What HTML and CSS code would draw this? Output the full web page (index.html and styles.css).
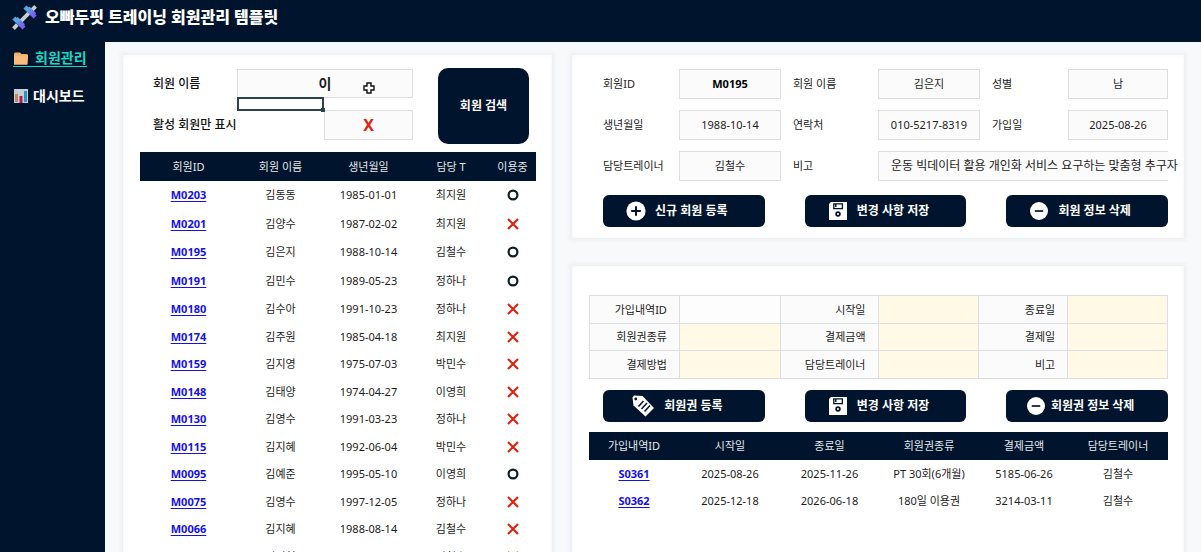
FILE: index.html
```html
<!DOCTYPE html>
<html lang="ko">
<head>
<meta charset="utf-8">
<title>오빠두핏 트레이닝 회원관리 템플릿</title>
<link rel="stylesheet" href="styles.css">
</head>
<body>
<svg class="defs" aria-hidden="true">
  <symbol id="plus" viewBox="0 0 20 20"><circle cx="10" cy="10" r="9.6" fill="#fff"/><path d="M10 5.2v9.6M5.2 10h9.6" stroke="#00152d" stroke-width="2"/></symbol>
  <symbol id="minus" viewBox="0 0 20 20"><circle cx="10" cy="10" r="9" fill="#fff"/><path d="M5.8 10h8.4" stroke="#2a3b50" stroke-width="2"/></symbol>
  <symbol id="save" viewBox="0 0 20 20"><path d="M3 1H19v18H1V3z" fill="#fff"/><path d="M5.8 2.800h8.600v4.800h-8.600z" fill="none" stroke="#00152d" stroke-width="1.300"/><path d="M7.800 3v3" stroke="#00152d" stroke-width="1.400"/><circle cx="10" cy="13" r="1.900" fill="none" stroke="#00152d" stroke-width="1.700"/></symbol>
  <symbol id="tag" viewBox="0 0 24 24"><path d="M1.500 3.500 3 1.500l8.500.500L23 14l-8.500 8.500L2.500 11.500z" fill="#fff"/><circle cx="4.800" cy="5" r="1.400" fill="#00152d"/><path d="m7.500 12.500 5-5.500M10.500 15l5.500-6M13.500 17.500l5.500-6" stroke="#00152d" stroke-width="1.500"/></symbol>
  <symbol id="on" viewBox="0 0 12 12"><circle cx="6" cy="6" r="4.400" fill="none" stroke="#0c2020" stroke-width="2.200"/></symbol>
  <symbol id="off" viewBox="0 0 12 12"><path d="m1 1 10 10M11 1 1 11" stroke="#e02410" stroke-width="2.200"/></symbol>
</svg>

<header class="topbar">
  <svg class="logo" viewBox="0 0 26 26" aria-hidden="true">
    <defs><linearGradient id="g" x1="0" y1="0" x2="1" y2="1"><stop offset=".25" stop-color="#55a9dc"/><stop offset=".75" stop-color="#7a62f6"/></linearGradient></defs>
    <path d="M7.500 18.500 18.500 7.500" stroke="#c9ccd2" stroke-width="4"/>
    <path d="m1.500 24.500 4-4M20.500 5.500l4-4" stroke="#c9ccd2" stroke-width="4"/>
    <path d="M2 13.500 12.500 24" stroke="url(#g)" stroke-width="4.500"/>
    <path d="M5 13.500l7.500 7.500" stroke="url(#g)" stroke-width="3"/>
    <path d="M13.500 2 24 12.500" stroke="url(#g)" stroke-width="4.500"/>
    <path d="M17 2.500l7 7" stroke="url(#g)" stroke-width="3"/>
  </svg>
  <h1 class="title">오빠두핏 트레이닝 회원관리 템플릿</h1>
</header>

<div class="shell">
  <nav class="sidebar">
    <a class="nav-link active" href="#members"><svg class="nav-icon" viewBox="0 0 16 14" aria-hidden="true"><path d="M1 2.500 2 1.500h5L8.500 3H14l1 1-.500 9.500H1z" fill="#eeb16a"/><path d="M1 4.500h14l-1 9H1z" fill="#f8bd7c"/></svg>회원관리</a>
    <a class="nav-link" href="#dashboard"><svg class="nav-icon" viewBox="0 0 16 14" aria-hidden="true"><path d="M1 0h14v14H1z" fill="#c9cdd3"/><path d="M2 5h3v8H2z" fill="#b98a63"/><path d="M6.500 7h3v7h-3z" fill="#b01d50"/><path d="M11 2h3v11h-3z" fill="#2397c4"/></svg>대시보드</a>
  </nav>

  <main class="content">
    <section class="panel members">
      <form class="search">
        <label class="search-label" for="q">회원 이름</label>
        <div class="query"><input class="field query-input" id="q" value="이">
          <svg class="cursor" viewBox="0 0 12 12" aria-hidden="true"><path d="M4 1h4v3h3v4H8v3H4V8H1V4h3z" fill="#fff" stroke="#111" stroke-width="1.400"/></svg>
        </div>
        <div class="selection"></div>
        <label class="search-label active-label" for="act">활성 회원만 표시</label>
        <input class="field active-input" id="act" value="X">
        <button class="btn search-btn" type="button">회원 검색</button>
      </form>
      <table class="list member-list">
        <colgroup><col class="m1"><col class="m2"><col class="m3"><col class="m4"><col class="m5"></colgroup>
        <thead><tr><th>회원ID</th><th>회원 이름</th><th>생년월일</th><th>담당 T</th><th>이용중</th></tr></thead>
        <tbody>
          <tr><td><a href="#M0203">M0203</a></td><td>김동동</td><td>1985-01-01</td><td>최지원</td><td><svg class="mark"><use href="#on"/></svg></td></tr>
          <tr><td><a href="#M0201">M0201</a></td><td>김양수</td><td>1987-02-02</td><td>최지원</td><td><svg class="mark"><use href="#off"/></svg></td></tr>
          <tr><td><a href="#M0195">M0195</a></td><td>김은지</td><td>1988-10-14</td><td>김철수</td><td><svg class="mark"><use href="#on"/></svg></td></tr>
          <tr><td><a href="#M0191">M0191</a></td><td>김민수</td><td>1989-05-23</td><td>정하나</td><td><svg class="mark"><use href="#on"/></svg></td></tr>
          <tr><td><a href="#M0180">M0180</a></td><td>김수아</td><td>1991-10-23</td><td>정하나</td><td><svg class="mark"><use href="#off"/></svg></td></tr>
          <tr><td><a href="#M0174">M0174</a></td><td>김주원</td><td>1985-04-18</td><td>최지원</td><td><svg class="mark"><use href="#off"/></svg></td></tr>
          <tr><td><a href="#M0159">M0159</a></td><td>김지영</td><td>1975-07-03</td><td>박민수</td><td><svg class="mark"><use href="#off"/></svg></td></tr>
          <tr><td><a href="#M0148">M0148</a></td><td>김태양</td><td>1974-04-27</td><td>이영희</td><td><svg class="mark"><use href="#off"/></svg></td></tr>
          <tr><td><a href="#M0130">M0130</a></td><td>김영수</td><td>1991-03-23</td><td>정하나</td><td><svg class="mark"><use href="#off"/></svg></td></tr>
          <tr><td><a href="#M0115">M0115</a></td><td>김지혜</td><td>1992-06-04</td><td>박민수</td><td><svg class="mark"><use href="#off"/></svg></td></tr>
          <tr><td><a href="#M0095">M0095</a></td><td>김예준</td><td>1995-05-10</td><td>이영희</td><td><svg class="mark"><use href="#on"/></svg></td></tr>
          <tr><td><a href="#M0075">M0075</a></td><td>김영수</td><td>1997-12-05</td><td>정하나</td><td><svg class="mark"><use href="#off"/></svg></td></tr>
          <tr><td><a href="#M0066">M0066</a></td><td>김지혜</td><td>1988-08-14</td><td>김철수</td><td><svg class="mark"><use href="#off"/></svg></td></tr>
          <tr><td><a href="#M0061">M0061</a></td><td>김지현</td><td>1990-03-11</td><td>김철수</td><td><svg class="mark"><use href="#off"/></svg></td></tr>
        </tbody>
      </table>
    </section>

    <div class="side">
      <section class="panel detail">
        <form class="detail-form">
          <label for="d1">회원ID</label><input class="field strong" id="d1" value="M0195">
          <label for="d2">회원 이름</label><input class="field" id="d2" value="김은지">
          <label for="d3">성별</label><input class="field" id="d3" value="남">
          <label for="d4">생년월일</label><input class="field" id="d4" value="1988-10-14">
          <label for="d5">연락처</label><input class="field" id="d5" value="010-5217-8319">
          <label for="d6">가입일</label><input class="field" id="d6" value="2025-08-26">
          <label for="d7">담당트레이너</label><input class="field" id="d7" value="김철수">
          <label for="d8">비고</label><div class="field note"><input class="note-input" id="d8" value="운동 빅데이터 활용 개인화 서비스 요구하는 맞춤형 추구자"></div>
        </form>
        <div class="actions">
          <button class="btn" type="button"><svg class="icon"><use href="#plus"/></svg>신규 회원 등록</button>
          <button class="btn" type="button"><svg class="icon"><use href="#save"/></svg>변경 사항 저장</button>
          <button class="btn" type="button"><svg class="icon"><use href="#minus"/></svg>회원 정보 삭제</button>
        </div>
      </section>

      <section class="panel pass">
        <form class="pass-form">
          <label for="p1">가입내역ID</label><input class="plain" id="p1">
          <label for="p2">시작일</label><input id="p2">
          <label for="p3">종료일</label><input id="p3">
          <label for="p4">회원권종류</label><input id="p4">
          <label for="p5">결제금액</label><input id="p5">
          <label for="p6">결제일</label><input id="p6">
          <label for="p7">결제방법</label><input id="p7">
          <label for="p8">담당트레이너</label><input id="p8">
          <label for="p9">비고</label><input id="p9">
        </form>
        <div class="actions pass-actions">
          <button class="btn" type="button"><svg class="icon tag"><use href="#tag"/></svg>회원권 등록</button>
          <button class="btn" type="button"><svg class="icon"><use href="#save"/></svg>변경 사항 저장</button>
          <button class="btn tight" type="button"><svg class="icon"><use href="#minus"/></svg>회원권 정보 삭제</button>
        </div>
        <table class="list pass-list">
          <colgroup><col class="p1"><col class="p2"><col class="p3"><col class="p4"><col class="p5"><col class="p6"></colgroup>
          <thead><tr><th>가입내역ID</th><th>시작일</th><th>종료일</th><th>회원권종류</th><th>결제금액</th><th>담당트레이너</th></tr></thead>
          <tbody>
            <tr><td><a href="#S0361">S0361</a></td><td>2025-08-26</td><td>2025-11-26</td><td>PT 30회(6개월)</td><td>5185-06-26</td><td>김철수</td></tr>
            <tr><td><a href="#S0362">S0362</a></td><td>2025-12-18</td><td>2026-06-18</td><td>180일 이용권</td><td>3214-03-11</td><td>김철수</td></tr>
          </tbody>
        </table>
      </section>
    </div>
  </main>
</div>
</body>
</html>
```
FILE: styles.css
```css
* { box-sizing: border-box; }

body {
  margin: 0;
  height: 100vh;
  display: flex;
  flex-direction: column;
  overflow: hidden;
  background: #f7f9fb;
  color: #1c1c1c;
  font: 11px/16px "Noto Sans", "Noto Sans CJK KR", sans-serif;
}

input, button { font: inherit; color: inherit; min-width: 0; }

.defs { position: absolute; width: 0; height: 0; }

.topbar {
  flex: none;
  display: flex;
  align-items: center;
  gap: 8px;
  height: 42px;
  padding: 0 12px 8px;
  background: #00152d;
  color: #fff;
}
.logo { width: 25px; height: 25px; }
.title { margin: 0; font-size: 16px; line-height: 24px; font-weight: 900; }

.shell { flex: 1; display: flex; min-height: 0; }

.sidebar {
  flex: none;
  width: 105px;
  display: flex;
  flex-direction: column;
  align-items: flex-start;
  gap: 21px;
  padding: 8px 13px;
  background: #00152d;
}
.nav-link {
  display: flex;
  align-items: center;
  gap: 4px;
  color: #fff;
  font-size: 14px;
  line-height: 16px;
  font-weight: 700;
  text-decoration: none;
  white-space: nowrap;
}
.nav-link.active {
  gap: 6px;
  border-bottom: 1px solid #1fd6c4;
  color: #1fd6c4;
}
.nav-icon { width: 16px; height: 14px; }

.content {
  flex: 1;
  min-width: 0;
  display: grid;
  grid-template-columns: 429fr 612fr;
  gap: 20px;
  padding: 13px 17px 0 18px;
}
.panel {
  background: #fff;
  box-shadow: 0 0 4px 2px #eceef0, inset 0 0 4px #f4f5f6;
}
.members { padding: 14px 16px 0 17px; }
.side { display: flex; flex-direction: column; gap: 28px; min-width: 0; }

.search {
  display: grid;
  grid-template-columns: 97fr 87fr 89fr 123fr;
  grid-template-rows: 29px 12px 30px;
  margin-bottom: 12px;
  font-size: 12px;
}
.search-label {
  align-self: center;
  padding-left: 13px;
  font-weight: 500;
  white-space: nowrap;
  color: #111;
}
.active-label { grid-column: 1 / 3; grid-row: 3; }
.query { grid-column: 2 / 4; display: grid; position: relative; }
.field {
  width: 100%;
  padding: 0 4px;
  border: 1px solid #dedede;
  border-radius: 0;
  background: #fbfbfb;
  text-align: center;
}
.query-input { font-size: 14px; font-weight: 700; }
.cursor { position: absolute; top: 13px; right: 38px; width: 12px; height: 12px; }
.selection {
  grid-column: 2;
  grid-row: 2;
  position: relative;
  margin: -1px 0;
  border: 2px solid #2b4250;
  background: #fff;
}
.selection::after {
  content: "";
  position: absolute;
  right: -3px;
  bottom: -3px;
  width: 4px;
  height: 4px;
  background: #2b4250;
}
.active-input { grid-column: 3; grid-row: 3; color: #e02410; font-size: 16px; font-weight: 700; }

.btn {
  display: flex;
  align-items: center;
  justify-content: center;
  gap: 9px;
  height: 32px;
  padding: 0 14px 0 0;
  border: 0;
  border-radius: 6px;
  background: #00152d;
  color: #fff;
  font-size: 12px;
  font-weight: 700;
  white-space: nowrap;
}
.search-btn {
  grid-column: 4;
  grid-row: 1 / 4;
  height: 76px;
  margin: -1px 7px -4px 25px;
  padding: 0;
  border-radius: 10px;
}

.list { width: 100%; table-layout: fixed; border-collapse: collapse; text-align: center; }
.list th, .list td { padding: 0; font-weight: 400; white-space: nowrap; }
.list th { background: #00152d; color: #e4e7ea; }
.list a { color: #1410e6; font-weight: 700; text-underline-offset: 2px; }
.strong { font-weight: 700; color: #000; }
.member-list tr { height: 29px; }
.member-list tbody td { padding-bottom: 2px; }
.member-list tbody tr:nth-child(n+5) { height: 27px; }
.member-list tbody tr:nth-child(2n+3) { height: 28px; }
.m1 { width: 97px; }
.m2 { width: 87px; }
.m3 { width: 89px; }
.m4 { width: 76px; }
.m5 { width: 47px; }
.mark { display: block; width: 12px; height: 12px; margin: 0 auto; }

.detail { padding: 14px 16px 11px 31px; }
.detail-form {
  display: grid;
  grid-template-columns: 76fr 102fr 97fr 102fr 88fr 100fr;
  grid-auto-rows: 30px;
  row-gap: 11px;
  margin-bottom: 14px;
}
.detail-form label { align-self: center; white-space: nowrap; }
.detail-form label:nth-of-type(3n+2), .detail-form label:nth-of-type(3n) { padding-left: 12px; }
.note { grid-column: 4 / 7; display: flex; padding: 0; border-right: 0; }
.note-input {
  flex: 1;
  margin-right: -14px;
  padding: 0 0 0 12px;
  border: 0;
  background: none;
  font-size: 12px;
}

.actions { display: grid; grid-template-columns: repeat(3, 1fr); column-gap: 40px; }
.icon { width: 20px; height: 20px; }
.tag { width: 24px; height: 24px; }
.tight { gap: 5px; }

.pass { flex: 1; padding: 29px 16px 0 17px; }
.pass-form {
  display: grid;
  grid-template-columns: 90fr 101fr 98fr 101fr 89fr 100fr;
  grid-template-rows: 27px 26px 27px;
  gap: 1px;
  padding: 1px;
  background: #dcdfe1;
}
.pass-form label {
  display: flex;
  align-items: center;
  justify-content: flex-end;
  padding-right: 12px;
  background: #fbfbfb;
  white-space: nowrap;
}
.pass-form input { width: 100%; border: 0; border-radius: 0; background: #fff9e5; }
.pass-form .plain { background: #fdfdfd; }
.pass-actions { margin: 11px 0 10px 14px; }
.pass-list th { height: 28px; }
.pass-list td { height: 27px; }
.p1 { width: 90px; }
.p2 { width: 102px; }
.p3 { width: 97px; }
.p4 { width: 102px; }
.p5 { width: 88px; }
.p6 { width: 100px; }
```
